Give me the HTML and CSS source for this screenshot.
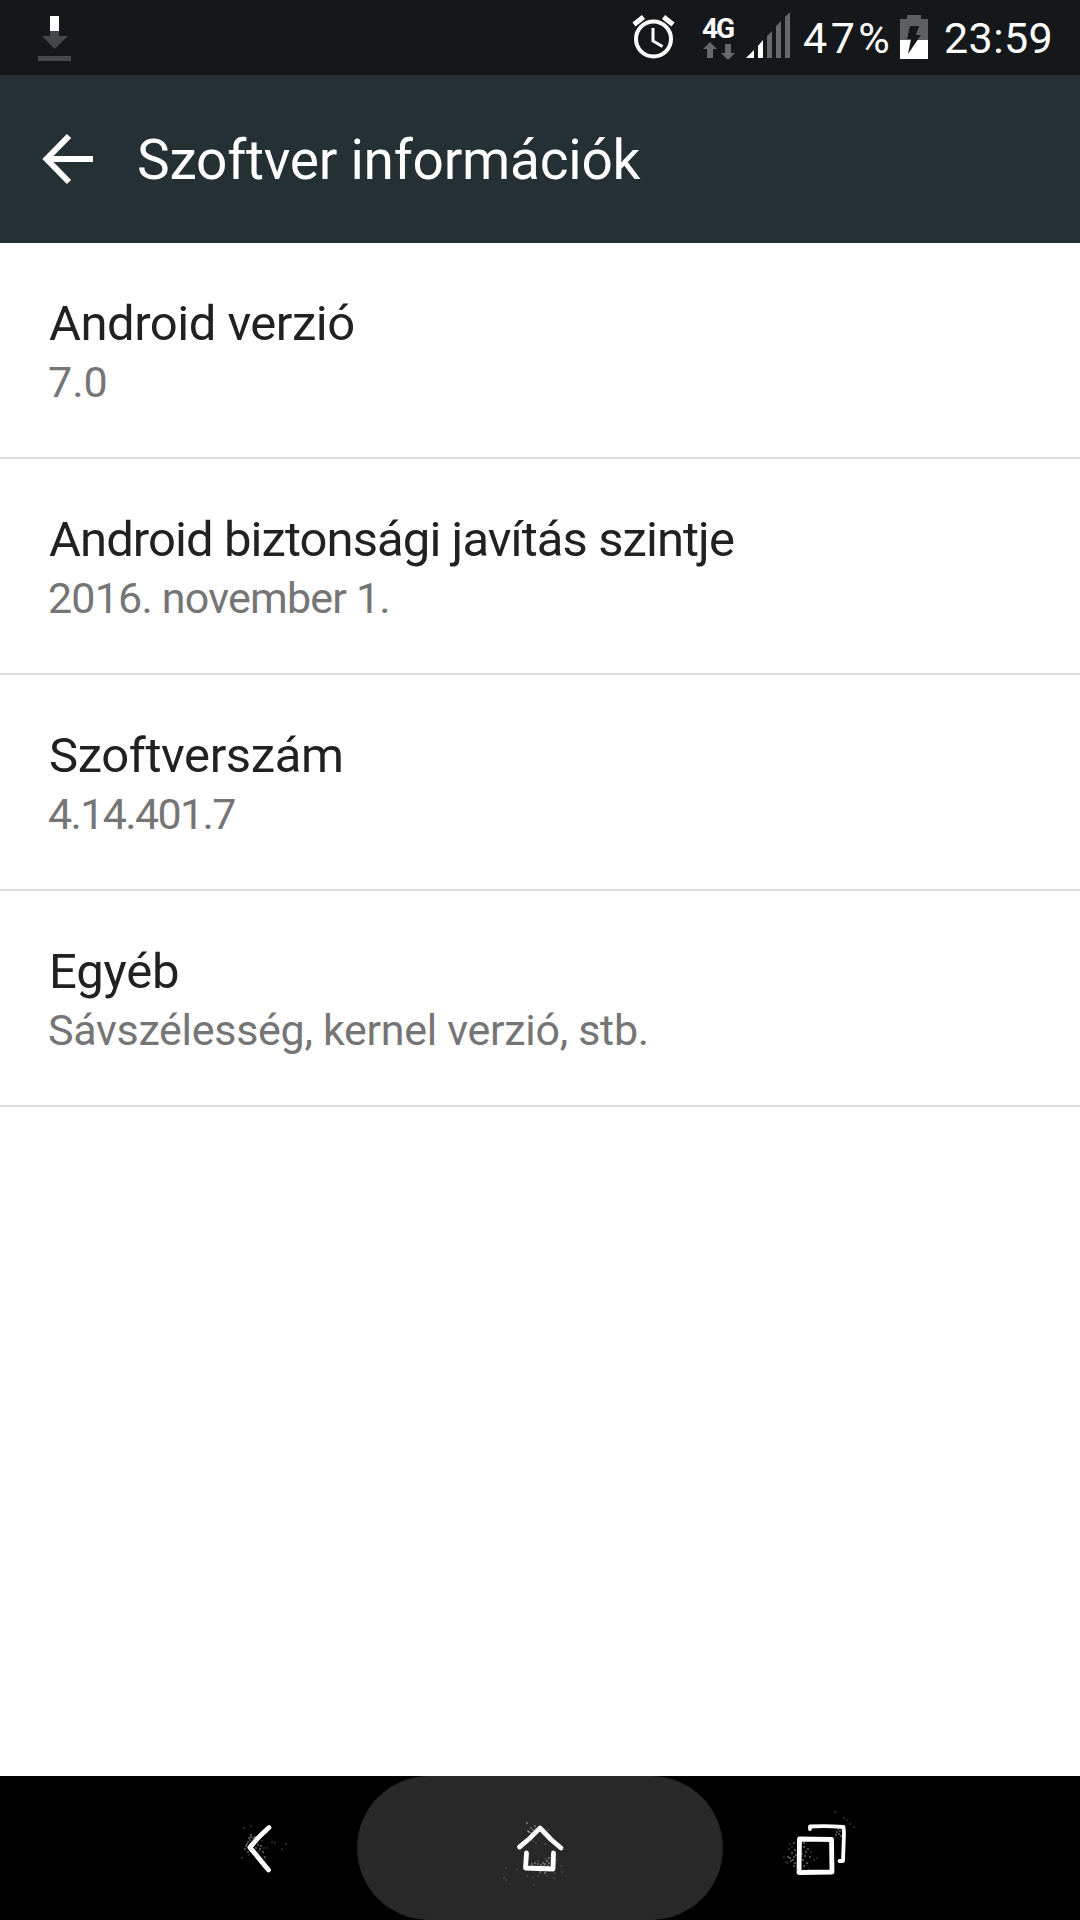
FILE: index.html
```
<!DOCTYPE html>
<html lang="hu">

<head>
  <meta charset="UTF-8">
  <meta name="viewport" content="width=device-width, initial-scale=1.0">
  <title>Szoftver információk</title>

  <link rel="stylesheet" href="styles.css">
</head>

<body>
  <div class="status">
    <svg class="download" width="34" height="46" viewBox="0 0 34 46">
      <path fill="#fff" d="M13 1h9v15h-9z"/>
      <path fill="#46474a" d="M13 16h9v5h9L17.500 34 5 21h8zM1 41h33v5H1z"/>
    </svg>
    <div class="indicators">
      <svg class="alarm" width="44" height="44" viewBox="0 0 44 44">
        <circle cx="21.500" cy="24" r="17.500" fill="none" stroke="#fff" stroke-width="4"/>
        <path d="M21 13v13l9.500 5.500" fill="none" stroke="#fff" stroke-width="3"/>
        <path d="M2 9.500l9.500-7.500M31.500 2l9.500 7.500" stroke="#fff" stroke-width="5"/>
      </svg>
      <div class="network">
        <b>4G</b>
        <svg width="32" height="18" viewBox="0 0 32 18">
          <path fill="#66686a" d="M7 0l7 7h-4v9H4V7H0zM22 2h6v9h4l-7 7-7-7h4z"/>
        </svg>
      </div>
      <svg class="signal" width="44" height="46" viewBox="0 0 44 46">
        <path fill="#fff" d="M0 46l8-8v8zM12 34l5-6v18h-5z"/>
        <path fill="#66686a" d="M21 24l5-5v27h-5zM30 14l5-5v37h-5zM39 5l5-5v46h-5z"/>
      </svg>
      <span class="percent">47%</span>
      <svg class="battery" width="28" height="44" viewBox="0 0 28 44">
        <path fill="#5d5f61" d="M7 0h14v4h7v21H0V4h7z"/>
        <path fill="#fff" d="M0 25h28v19H0z"/>
        <path fill="#14181b" d="M10 11h9l-3 9h5L8 39l3-15H7z"/>
      </svg>
      <span class="clock">23:59</span>
    </div>
  </div>

  <div class="header">
    <svg class="arrow" width="52" height="52" viewBox="0 0 52 52">
      <path d="M27 3L4.500 26 27 49M5 26h46" fill="none" stroke="#fff" stroke-width="6"/>
    </svg>
    <h1>Szoftver információk</h1>
  </div>

  <ul class="list">
    <li class="android">
      <h2>Android verzió</h2>
      <p>7.0</p>
    </li>
    <li class="security">
      <h2>Android biztonsági javítás szintje</h2>
      <p>2016. november 1.</p>
    </li>
    <li class="software">
      <h2>Szoftverszám</h2>
      <p>4.14.401.7</p>
    </li>
    <li class="more">
      <h2>Egyéb</h2>
      <p>Sávszélesség, kernel verzió, stb.</p>
    </li>
  </ul>

  <div class="nav">
    <div class="back">
      <svg width="80" height="80" viewBox="0 0 80 80">
        <path class="stroke" d="M49 19.500Q38 29 30 39.500L48.500 62"/>
        <path class="stroke thin" d="M46 23Q36 31 29.500 39.500L34 45"/>
        <path class="spray" d="M31 27h0M33 30h0M30 32h0M35 29h0M28 34h0M26 38h0M25 41h0M28 44h0M27 36h0M31 29h0M36 40h0M38 37h0M40 41h0M43 44h0M41 38h0M45 49h0M38 46h0M29 30h0M33 34h0"/>
        <path class="spray faint" d="M24 20h0M31 18h0M22 50h0M55 35h0M52 34h0M62 41h0M66 36h0M42 33h0M44 40h0M47 40h0M29 47h0M39 43h0"/>
      </svg>
    </div>
    <div class="home">
      <svg width="80" height="80" viewBox="0 0 80 80">
        <path class="stroke" d="M19.500 39Q30 31 40 20l11 11.500L61 40"/>
        <path class="stroke" d="M26.500 45L25.500 60l14 .5 13.500.5.500-16"/>
        <path class="spray" d="M27 15h0M31 20h0M33 22h0M29 24h0M31 25h0M34 24h0M35 18h0M32 26h0M28 23h0M36 21h0M32 56h0M35 55h0M38 56h0M41 57h0M43 55h0M45 56h0M47 53h0M44 58h0M49 55h0M49 50h0M48 58h0M40 64h0M45 65h0"/>
        <path class="spray faint" d="M6 60h0M4 70h0M6 72h0M17 62h0M27 68h0M34 77h0M33 70h0M38 68h0M54 70h0M55 65h0M62 64h0M61 58h0M57 52h0M36 35h0M45 36h0M33 33h0M48 22h0M38 53h0M46 51h0M47 68h0"/>
      </svg>
    </div>
    <div class="recent">
      <svg width="80" height="80" viewBox="0 0 80 80">
        <path class="stroke" d="M19.500 31l32 .5L52 64l-33 .5z"/>
        <path class="stroke thin" d="M30 21v-2.500q17-1 33.500.5l.5 6-1 28h-3.500"/>
        <path class="spray" d="M14 35h0M15 42h0M12 45h0M10 50h0M13 52h0M14 49h0M8 49h0M15 55h0M11 53h0M14 58h0M24 39h0M26 44h0M25 48h0M23 52h0M27 55h0M24 58h0M28 41h0M22 46h0M30 49h0M24 35h0M16 47h0M58 21h0M60 23h0M57 24h0M59 26h0M61 28h0M56 27h0"/>
        <path class="spray faint" d="M6 54h0M4 49h0M10 36h0M9 41h0M8 55h0M17 62h0M34 52h0M37 50h0M29 61h0M55 4h0M64 10h0M67 12h0M74 19h0M70 16h0M54 30h0M31 44h0M12 39h0"/>
      </svg>
    </div>
  </div>
</body>

</html>
```
FILE: styles.css
```
* {
  margin: 0;
  padding: 0;
  box-sizing: border-box;
}

body {
  height: 1920px;
  display: flex;
  flex-direction: column;
  font-family: Roboto, sans-serif;
  background-color: #fff;
  overflow: hidden;
}

ul {
  list-style: none;
}

svg {
  display: block;
  flex-shrink: 0;
}

h1, h2 {
  font-weight: normal;
}

/* status bar */
.status {
  height: 75px;
  display: flex;
  justify-content: space-between;
  padding: 0 26px 0 37px;
  color: #fff;
  background-color: #14181b;
}

.download {
  margin-top: 15px;
}

.indicators {
  display: flex;
}

.indicators span {
  font-size: 43px;
  line-height: 76px;
}

.alarm {
  margin-top: 15px;
}

.network {
  width: 32px;
  margin: 18px 11px 0 27px;
}

.network b {
  display: block;
  font-size: 28px;
  line-height: 22px;
  height: 24px;
  letter-spacing: -2px;
  margin-left: -1px;
}

.signal {
  margin-top: 12px;
}

.indicators .percent {
  width: 97px;
  margin-left: 13px;
  letter-spacing: 3.5px;
}

.battery {
  margin-top: 15px;
}

.indicators .clock {
  width: 110px;
  margin-left: 16px;
  letter-spacing: 0.4px;
}

/* title bar */
.header {
  height: 168px;
  display: flex;
  align-items: center;
  padding-left: 42px;
  color: #fff;
  background-color: #253035;
}

.header h1 {
  font-size: 55px;
  letter-spacing: -0.25px;
  margin: 2px 0 0 43px;
}

/* settings list */
.list li {
  height: 216px;
  padding: 51px 48px 0;
  border-bottom: 2px solid #dcdcdc;
}

.list h2 {
  font-size: 49px;
  line-height: 60px;
  padding-left: 1px;
  color: #212121;
}

.list p {
  font-size: 43px;
  line-height: 56px;
  color: #757575;
}

.android h2 {
  letter-spacing: -0.5px;
}

.security h2 {
  letter-spacing: -0.93px;
}

.security p {
  letter-spacing: -0.8px;
}

.software h2 {
  letter-spacing: -0.4px;
}

.software p {
  letter-spacing: -1.65px;
}

.more h2 {
  letter-spacing: -0.2px;
}

.more p {
  letter-spacing: -0.3px;
}

/* navigation keys */
.nav {
  height: 144px;
  margin-top: auto;
  display: flex;
  justify-content: center;
  background-color: #000;
}

.nav div {
  display: flex;
  align-items: center;
}

.back {
  padding-right: 57px;
}

.home {
  width: 366px;
  justify-content: center;
  border-radius: 72px;
  background-color: #282828;
}

.recent {
  padding-left: 57px;
}

.stroke {
  fill: none;
  stroke: #fff;
  stroke-width: 4.8;
  stroke-linecap: round;
  stroke-linejoin: round;
}

.thin {
  stroke-width: 3.8;
}

.spray {
  stroke: #ccc;
  stroke-width: 1.4;
  stroke-linecap: round;
}

.faint {
  stroke: #666;
}
```
